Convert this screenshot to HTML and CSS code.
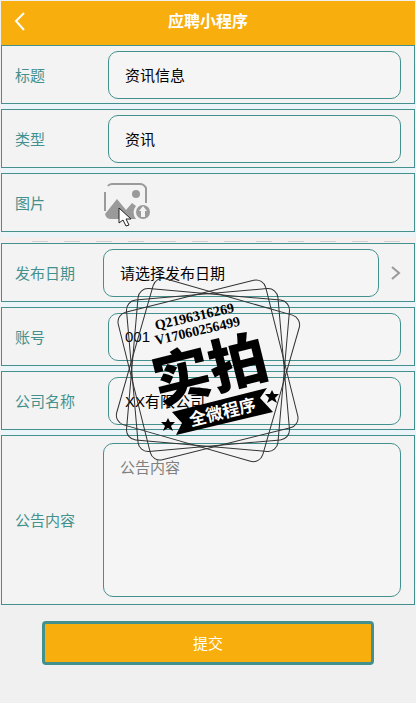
FILE: index.html
```
<!DOCTYPE html>
<html lang="zh-CN">
<head>
  <meta charset="UTF-8">
  <meta name="viewport" content="width=device-width, initial-scale=1.0">
  <title>应聘小程序</title>
  <link rel="stylesheet" href="styles.css">
</head>
<body>
  <header class="navbar">
    <a class="back" href="#" aria-label="返回">
      <svg width="12" height="20" viewBox="0 0 12 20"><path d="M11 2 L3 10 L11 19"/></svg>
    </a>
    <h1>应聘小程序</h1>
  </header>

  <form class="form">
    <div class="row">
      <label for="title">标题</label>
      <input class="field" type="text" id="title" value="资讯信息">
    </div>
    <div class="row">
      <label for="type">类型</label>
      <input class="field" type="text" id="type" value="资讯">
    </div>
    <div class="row">
      <label for="picture">图片</label>
      <button class="upload" type="button" id="picture" aria-label="上传图片">
        <svg width="48" height="40" viewBox="0 0 48 40">
          <path class="frame" d="M2 28 V9"/>
          <path class="frame" d="M5 3 Q6 1 9 1 H37 Q41 1 43 5 V20"/>
          <circle cx="33" cy="11" r="4"/>
          <path d="M2 31 L14 16 L23 27 L29 20 L33 23 Q28 29 33 36 H8 Q3 36 2 31 Z"/>
          <circle cx="40" cy="29" r="7"/>
          <path class="arrow" d="M40 23 L44 28 H42 V34 H38 V28 H36 Z"/>
        </svg>
      </button>
      <!-- 鼠标指针 -->
      <svg class="cursor" width="14" height="20" viewBox="0 0 14 20">
        <path d="M1 1 V16 L5 13 L8 19 L11 18 L8 12 H13 Z"/>
      </svg>
    </div>
    <div class="divider"></div>
    <div class="row picker-row">
      <label for="date">发布日期</label>
      <button class="field picker" type="button" id="date">请选择发布日期</button>
      <svg class="more" width="10" height="16" viewBox="0 0 10 16"><path d="M1 2 L8 8 L1 14"/></svg>
    </div>
    <div class="row">
      <label for="account">账号</label>
      <input class="field" type="text" id="account" value="001">
    </div>
    <div class="row">
      <label for="company">公司名称</label>
      <input class="field" type="text" id="company" value="XX有限公司">
    </div>
    <div class="row content-row">
      <label for="content">公告内容</label>
      <textarea class="field" id="content" placeholder="公告内容"></textarea>
    </div>

    <!-- 水印 -->
    <svg class="stamp" width="186" height="186" viewBox="0 0 186 186">
      <g class="frames">
        <rect x="17" y="17" width="152" height="152" rx="10" transform="rotate(-14 93 93)"/>
        <rect x="17" y="17" width="152" height="152" rx="10" transform="rotate(-5 93 93)"/>
        <rect x="17" y="17" width="152" height="152" rx="10" transform="rotate(5 93 93)"/>
        <rect x="17" y="17" width="152" height="152" rx="10" transform="rotate(16 93 93)"/>
      </g>
      <text class="contact" transform="translate(41 53) rotate(-13)">Q2196316269</text>
      <text class="contact" transform="translate(41 68) rotate(-13)">V17060256499</text>
      <text class="big" transform="translate(100 113) rotate(-14)">实拍</text>
      <path d="M57 135 L152 111 L145 121 L158 135 L61 158 L67 146 Z"/>
      <text class="ribbon" transform="translate(109 141) rotate(-14)">全微程序</text>
      <path id="star" d="M53 141 L55 145 L60 145 L56 149 L58 154 L53 151 L48 154 L50 149 L46 145 L51 145 Z"/>
      <use href="#star" x="104" y="-28"/>
    </svg>

    <div class="actions">
      <button class="submit" type="submit">提交</button>
    </div>
  </form>
</body>
</html>
```
FILE: styles.css
```
* { box-sizing: border-box; }
body {
  margin: 0;
  padding: 1px 1px 0;
  background: #f0f0f0;
  color: #111;
  font-family: "Liberation Sans", "Noto Sans CJK SC", sans-serif;
  font-size: 15px;
}
svg { display: block; }

.navbar {
  position: relative;
  display: flex;
  align-items: center;
  justify-content: center;
  height: 44px;
  padding-bottom: 2px;
  background: #f8ae0c;
  color: #fff;
}
.navbar h1 {
  margin: 0;
  font-size: 16px;
  line-height: 24px;
}
.back {
  position: absolute;
  left: 12px;
  top: 10px;
}
.back path {
  fill: none;
  stroke: #fff;
  stroke-width: 2;
}

.form {
  position: relative;
}
.row {
  position: relative;
  display: flex;
  align-items: center;
  height: 59px;
  padding: 0 13px;
  border: 1px solid #43918e;
  background: #f3f3f3;
  box-shadow: 0 5px 0 #ebf4f8;
  margin-bottom: 5px;
}
.row label {
  flex: none;
  width: 93px;
  padding-bottom: 1px;
  color: #43918e;
}
.field {
  flex: 1;
  min-width: 0;
  height: 48px;
  padding: 0 16px;
  border: 1px solid #43918e;
  border-radius: 10px;
  background: #f5f5f5;
  color: #000;
  font: inherit;
  text-align: left;
  outline: none;
}

.upload {
  margin-left: -5px;
  padding: 0;
  border: 0;
  background: none;
  fill: #9a9a9a;
}
.upload .frame {
  fill: none;
  stroke: #9a9a9a;
  stroke-width: 2;
}
.upload .arrow { fill: #f3f3f3; }
.cursor {
  position: absolute;
  left: 116px;
  top: 33px;
  fill: #fff;
  stroke: #222;
}

.divider {
  height: 6px;
  background: repeating-linear-gradient(90deg, #d0d0d0 0 16px, transparent 16px 32px) 31px 4px / 100% 1px no-repeat, #f5efef;
}

.picker-row label,
.content-row label { width: 88px; }
.more {
  margin-left: 12px;
  fill: none;
  stroke: #999;
  stroke-width: 2;
}

.content-row {
  height: 170px;
  margin-bottom: 0;
  box-shadow: none;
}
.content-row .field {
  height: 154px;
  padding: 12px 16px;
  line-height: 24px;
  resize: none;
}
.field::placeholder { color: #808080; }

.stamp {
  position: absolute;
  left: 50%;
  top: 232px;
  margin-left: -93px;
  pointer-events: none;
}
.frames {
  fill: none;
  stroke: #333;
}
.contact {
  font: bold 14px "Liberation Serif", serif;
}
.big {
  font-size: 58px;
  font-weight: 900;
  text-anchor: middle;
}
.ribbon {
  fill: #fff;
  font-size: 17px;
  font-weight: 700;
  text-anchor: middle;
}

.actions {
  padding: 16px 41px;
}
.submit {
  width: 100%;
  height: 44px;
  padding: 0 0 2px;
  border: 3px solid #43918e;
  border-radius: 4px;
  background: #f8ae0c;
  color: #fff;
  font: inherit;
}
```
